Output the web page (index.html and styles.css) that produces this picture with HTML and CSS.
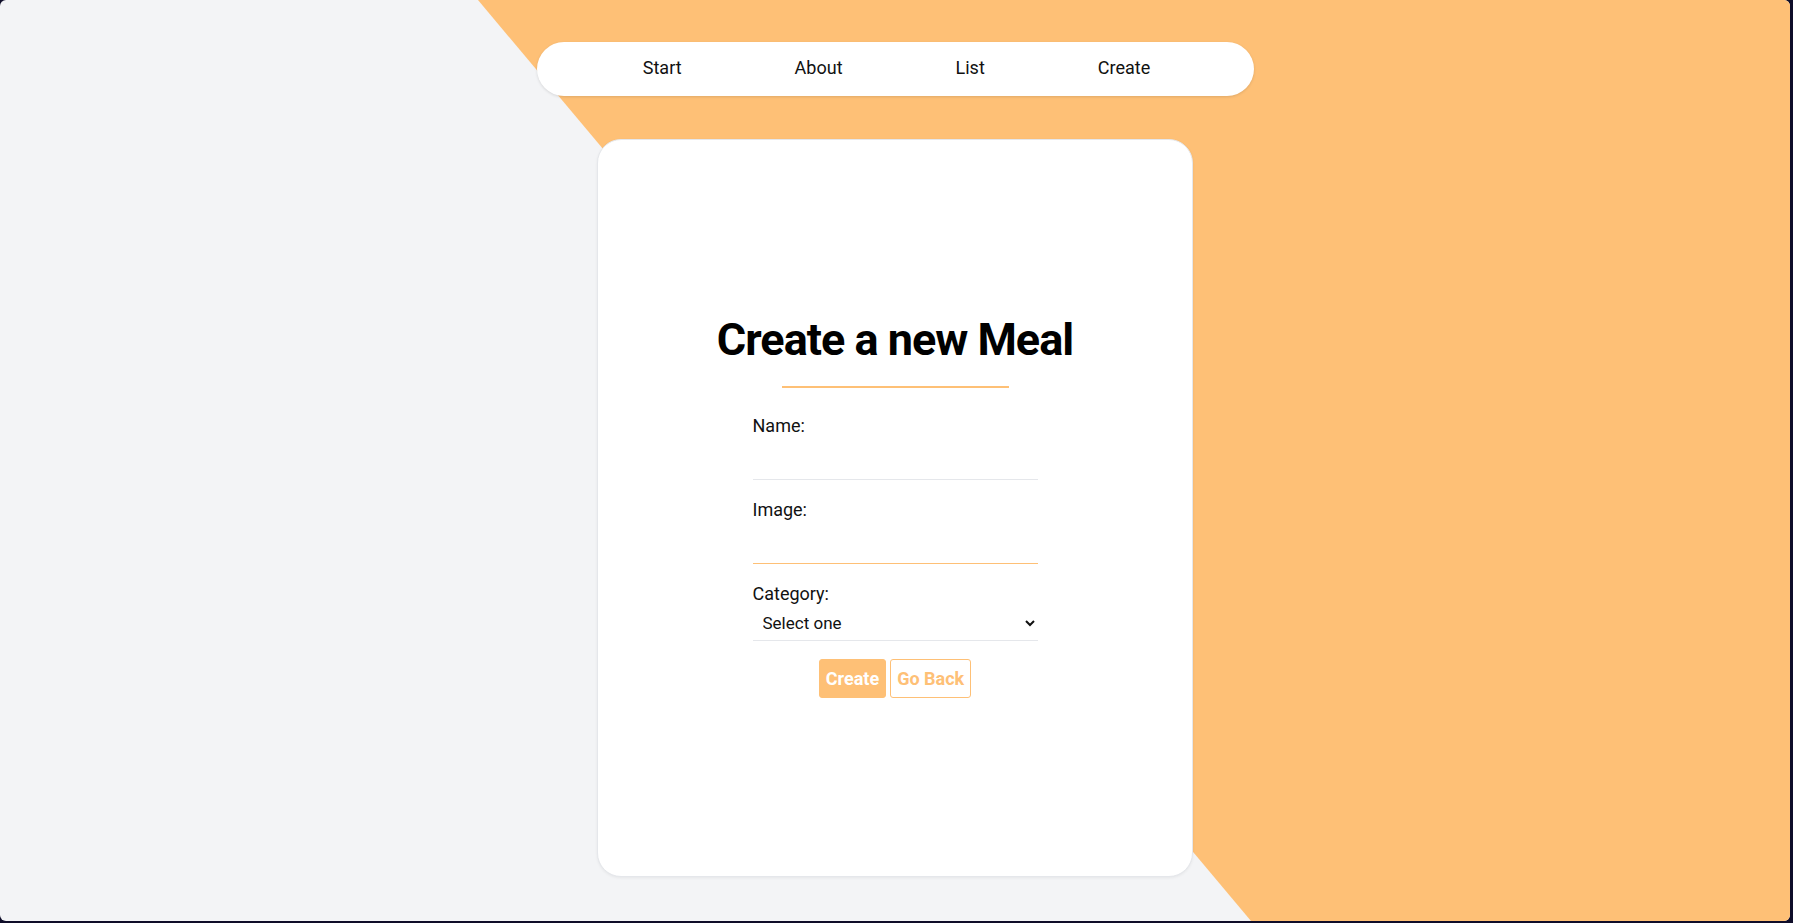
FILE: index.html
```html
<!DOCTYPE html>
<html lang="en">
<head>
<meta charset="utf-8">
<title>Create a new Meal</title>
<link rel="stylesheet" href="styles.css">
</head>
<body>
<div class="frame">
  <div class="accent"></div>
  <div class="page">
    <nav class="nav">
      <a class="nav-link" href="#">Start</a>
      <a class="nav-link" href="#">About</a>
      <a class="nav-link" href="#">List</a>
      <a class="nav-link" href="#">Create</a>
    </nav>
    <main class="card">
      <h1 class="title">Create a new Meal</h1>
      <div class="rule"></div>
      <form class="form">
        <div class="field">
          <label class="label" for="name">Name:</label>
          <input class="input" id="name" type="text">
        </div>
        <div class="field">
          <label class="label" for="image">Image:</label>
          <input class="input input-active" id="image" type="text">
        </div>
        <div class="field">
          <label class="label" for="category">Category:</label>
          <select class="select" id="category">
            <option>Select one</option>
          </select>
        </div>
        <div class="actions">
          <button class="btn btn-primary" type="button">Create</button>
          <button class="btn btn-outline" type="button">Go Back</button>
        </div>
      </form>
    </main>
  </div>
</div>
</body>
</html>
```
FILE: styles.css
```css
* { box-sizing: border-box; }

html, body {
  margin: 0;
  padding: 0;
}

body {
  background: #0f0d29;
  font-family: Roboto, "Noto Sans", sans-serif;
  color: #111;
  width: 1793px;
  height: 923px;
  overflow: hidden;
}

.frame {
  position: relative;
  width: 1790px;
  height: 921px;
  background: #f3f4f6;
  border-radius: 6px;
  overflow: hidden;
}

.accent {
  position: absolute;
  inset: 0;
  background: #fec076;
  clip-path: polygon(478px 0, 100% 0, 100% 100%, 1251px 100%);
}

.page {
  position: relative;
  display: flex;
  flex-direction: column;
  align-items: center;
  padding-top: 42px;
}

.nav {
  width: 717px;
  height: 54px;
  background: #fff;
  border-radius: 27px;
  box-shadow: 0 1px 3px rgba(0, 0, 0, 0.12);
  display: flex;
  align-items: center;
  justify-content: center;
  gap: 113px;
  padding-left: 3px;
  padding-bottom: 2px;
}

.nav-link {
  color: #111;
  text-decoration: none;
  font-size: 18px;
  line-height: 24px;
}

.card {
  margin-top: 43px;
  width: 596px;
  height: 738px;
  background: #fff;
  border-radius: 24px;
  border: 1px solid #e5e7eb;
  box-shadow: 0 1px 3px rgba(0, 0, 0, 0.06);
  display: flex;
  flex-direction: column;
  align-items: center;
  justify-content: center;
  padding-bottom: 5px;
}

.title {
  margin: 0;
  font-size: 45px;
  line-height: 54px;
  font-weight: 700;
  letter-spacing: -1px;
  color: #000;
}

.rule {
  width: 227px;
  height: 2px;
  background: #fec076;
  margin-top: 19px;
}

.form {
  width: 285px;
  margin-top: 26px;
  display: flex;
  flex-direction: column;
}

.field {
  display: flex;
  flex-direction: column;
  margin-bottom: 18px;
}

.label {
  font-size: 18px;
  line-height: 24px;
  color: #111;
}

.input {
  height: 42px;
  border: none;
  border-bottom: 1px solid #e5e7eb;
  outline: none;
  font-family: inherit;
  font-size: 16px;
  padding: 0 8px;
  background: transparent;
}

.input-active {
  border-bottom-color: #fec076;
}

.select {
  height: 35px;
  border: none;
  border-bottom: 1px solid #e5e7eb;
  background: #fff;
  font-family: inherit;
  font-size: 17px;
  color: #111;
  padding: 0 4px 0 6px;
  outline: none;
}

.actions {
  display: flex;
  justify-content: center;
  gap: 4px;
  margin-top: 0;
}

.btn {
  height: 39px;
  padding: 0 6px;
  font-family: inherit;
  font-size: 18px;
  font-weight: 700;
  border-radius: 3px;
  cursor: pointer;
}

.btn-primary {
  background: #fec076;
  color: #fff;
  border: 1px solid #fec076;
}

.btn-outline {
  background: #fff;
  color: #fec076;
  border: 1px solid #fec076;
}
```
